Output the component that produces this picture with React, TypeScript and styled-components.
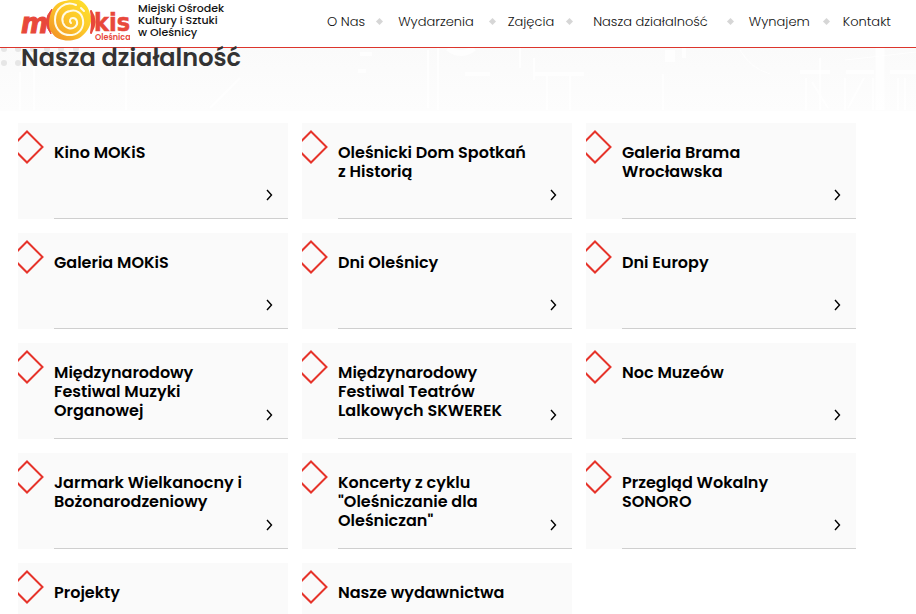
import React from "react";
import styled, { createGlobalStyle } from "styled-components";

const Global = createGlobalStyle`
  * { box-sizing: border-box; }
  html { overflow: hidden; }
  body { margin: 0; background: #fff; color: #000; font-family: Poppins, Inter, "Open Sans", sans-serif; }
  a { color: inherit; text-decoration: none; }
  h1, h2 { margin: 0; }
`;

const Header = styled.header`
  height: 48px;
  display: flex;
  align-items: flex-start;
  justify-content: space-between;
  border-bottom: 1px solid #dc352c;
  padding: 0 25px 0 20px;
  background: #fff;
`;

const Brand = styled.a`
  display: flex;
  gap: 8px;
`;

const BrandName = styled.span`
  padding-top: 2px;
  font-size: 11px;
  line-height: 12px;
  font-weight: 500;
  color: #111;
  white-space: nowrap;
`;

const Nav = styled.nav`
  display: flex;
  align-items: center;
  height: 43px;
`;

const NavLink = styled.a`
  font-size: 13px;
  font-weight: 300;
  color: #111;
  white-space: nowrap;
`;

const Dot = styled.span<{ $before: number; $after: number }>`
  width: 5px;
  height: 5px;
  background: #d6d6d6;
  transform: rotate(45deg);
  margin: 0 ${(p) => p.$after}px 0 ${(p) => p.$before}px;
`;

const Hero = styled.section`
  position: relative;
  height: 63px;
  background: linear-gradient(#fafafa, #fdfdfd);
  padding-left: 21px;
`;

const Backdrop = styled.svg`
  position: absolute;
  inset: 0;
  width: 100%;
  height: 100%;
`;

const Title = styled.h1`
  position: relative;
  font-size: 24px;
  line-height: 20px;
  font-weight: 600;
  color: #333;
`;

const Grid = styled.main`
  display: grid;
  grid-template-columns: repeat(3, 1fr);
  gap: 14px;
  padding: 12px 60px 14px 18px;
`;

const Card = styled.a`
  display: grid;
  grid-template-columns: 36px 1fr;
  height: 96px;
  background: #fafafa;
`;

const Diamond = styled.svg`
  margin-top: 7px;
`;

const CardBody = styled.div`
  display: flex;
  flex-direction: column;
  justify-content: space-between;
  padding: 20px 14px 17px 0;
  border-bottom: 1px solid #cfcfcf;
`;

const CardTitle = styled.h2`
  height: 42px;
  font-size: 16px;
  line-height: 19px;
  font-weight: 600;
  white-space: pre-line;
`;

const Arrow = styled.svg`
  align-self: flex-end;
  flex: none;
`;

const LogoWord = styled.text`
  font-family: "DejaVu Sans Condensed", "DejaVu Sans", sans-serif;
  font-weight: 700;
  fill: #e8483b;
`;

const LogoTown = styled.text`
  font-size: 8px;
  font-weight: 600;
  fill: #e8483b;
`;

const Logo = () => (
  <svg width="110" height="46" viewBox="20 0 110 46" role="img" aria-label="MOKiS Oleśnica">
    <defs>
      <linearGradient id="sun" x1="1" y1="0" x2="0" y2="1">
        <stop offset="0" stopColor="#ffe52e" />
        <stop offset="0.5" stopColor="#fcc52a" />
        <stop offset="1" stopColor="#f08a24" />
      </linearGradient>
    </defs>
    <LogoWord x="21" y="33" fontSize="29" fontStyle="italic" stroke="#e8483b" strokeWidth="1">m</LogoWord>
    <path d="M52 9Q41 21 51 34Q48 21 52 9Z" fill="#e8483b" stroke="#e8483b" strokeLinejoin="round" />
    <path d="M70 0C80-3 88 4 90 14C94 20 88 32 82 36C76 42 58 43 52 33C46 27 50 10 56 5C60 1 65 1 70 0Z" fill="url(#sun)" />
    <g fill="none" stroke="#fffbe6" strokeLinecap="round">
      <path d="M76 5C65 0 55 9 55 20C55 30 63 36 72 35C80 34 84 27 83 20C82 13 76 9 70 11C64 12 61 17 63 23C65 28 71 30 75 27C79 24 77 18 73 18C70 18 69 21 71 23" strokeWidth="2" />
      <path d="M81 8L84 11" strokeWidth="2" />
    </g>
    <path d="M91 11Q98 21 91 33Q93 21 91 11Z" fill="#e8483b" stroke="#e8483b" strokeWidth="2" strokeLinejoin="round" />
    <LogoWord x="94" y="31" fontSize="25" stroke="#e8483b" strokeWidth="0.5">kis</LogoWord>
    <LogoTown x="95" y="40">Oleśnica</LogoTown>
  </svg>
);

const nav = [
  { label: "O Nas", before: 12, after: 16 },
  { label: "Wydarzenia", before: 16, after: 13 },
  { label: "Zajęcia", before: 13, after: 21 },
  { label: "Nasza działalność", before: 20, after: 16 },
  { label: "Wynajem", before: 14, after: 14 },
  { label: "Kontakt", before: 0, after: 0 },
];

const cards = [
  "Kino MOKiS", "Oleśnicki Dom Spotkań\nz Historią", "Galeria Brama\nWrocławska",
  "Galeria MOKiS", "Dni Oleśnicy", "Dni Europy",
  "Międzynarodowy\nFestiwal Muzyki\nOrganowej", "Międzynarodowy\nFestiwal Teatrów\nLalkowych SKWEREK", "Noc Muzeów",
  "Jarmark Wielkanocny i\nBożonarodzeniowy", "Koncerty z cyklu\n\"Oleśniczanie dla\nOleśniczan\"", "Przegląd Wokalny\nSONORO",
  "Projekty", "Nasze wydawnictwa",
];

export default function App() {
  return (
    <>
      <Global />
      <Header>
        <Brand href="#">
          <Logo />
          <BrandName>Miejski Ośrodek<br />Kultury i Sztuki<br />w Oleśnicy</BrandName>
        </Brand>
        <Nav>
          {nav.map((n, i) => (
            <React.Fragment key={n.label}>
              <NavLink href="#">{n.label}</NavLink>
              {i < nav.length - 1 && <Dot $before={n.before} $after={n.after} />}
            </React.Fragment>
          ))}
        </Nav>
      </Header>
      <Hero>
        <Backdrop aria-hidden="true">
          <g fill="none" stroke="#fff" strokeOpacity="0.7">
            <path d="M448 0Q461 10 474 0" strokeWidth="6" />
            <path d="M20 62V24M34 62V14M126 0V62M240 30L210 60M428 2V60M438 0V62" strokeWidth="2" />
            <path d="M520 0V20M534 10V32M547 28V62M570 28V62M663 26V62M820 10V62M806 30V62M812 34L828 60M845 30V62M864 30L848 60M873 30V62M898 30V62M905 30V62" strokeWidth="2" />
            <path d="M880 0V62" strokeWidth="9" />
            <path d="M535 26H584M800 24H830M846 24H874M890 24H916M360 6H372M358 23H366M465 26H490" strokeWidth="4" />
            <path d="M665 8H675M682 4H686" strokeWidth="12" />
            <path d="M740 2Q750 20 770 26M845 12L916 4" />
          </g>
          <g fill="#e6e6e6">
            {[4, 18, 33, 47, 61, 76].map((x) => (
              <React.Fragment key={x}>
                <circle cx={x} cy="1" r="3" />
                <circle cx={x} cy="15" r="3" />
              </React.Fragment>
            ))}
          </g>
        </Backdrop>
        <Title>Nasza działalność</Title>
      </Hero>
      <Grid>
        {cards.map((c) => (
          <Card href="#" key={c}>
            <Diamond width="28" height="34" viewBox="0 0 28 34" fill="none" stroke="#e6332a" strokeWidth="2" aria-hidden="true">
              <path d="M9 1.5L24.5 17L9 32.5L-6.5 17Z" />
            </Diamond>
            <CardBody>
              <CardTitle>{c}</CardTitle>
              <Arrow width="10" height="12" viewBox="0 0 10 12" fill="none" stroke="#000" strokeWidth="1.4" aria-hidden="true">
                <path d="M3 1L7.5 6L3 11" />
              </Arrow>
            </CardBody>
          </Card>
        ))}
      </Grid>
    </>
  );
}
